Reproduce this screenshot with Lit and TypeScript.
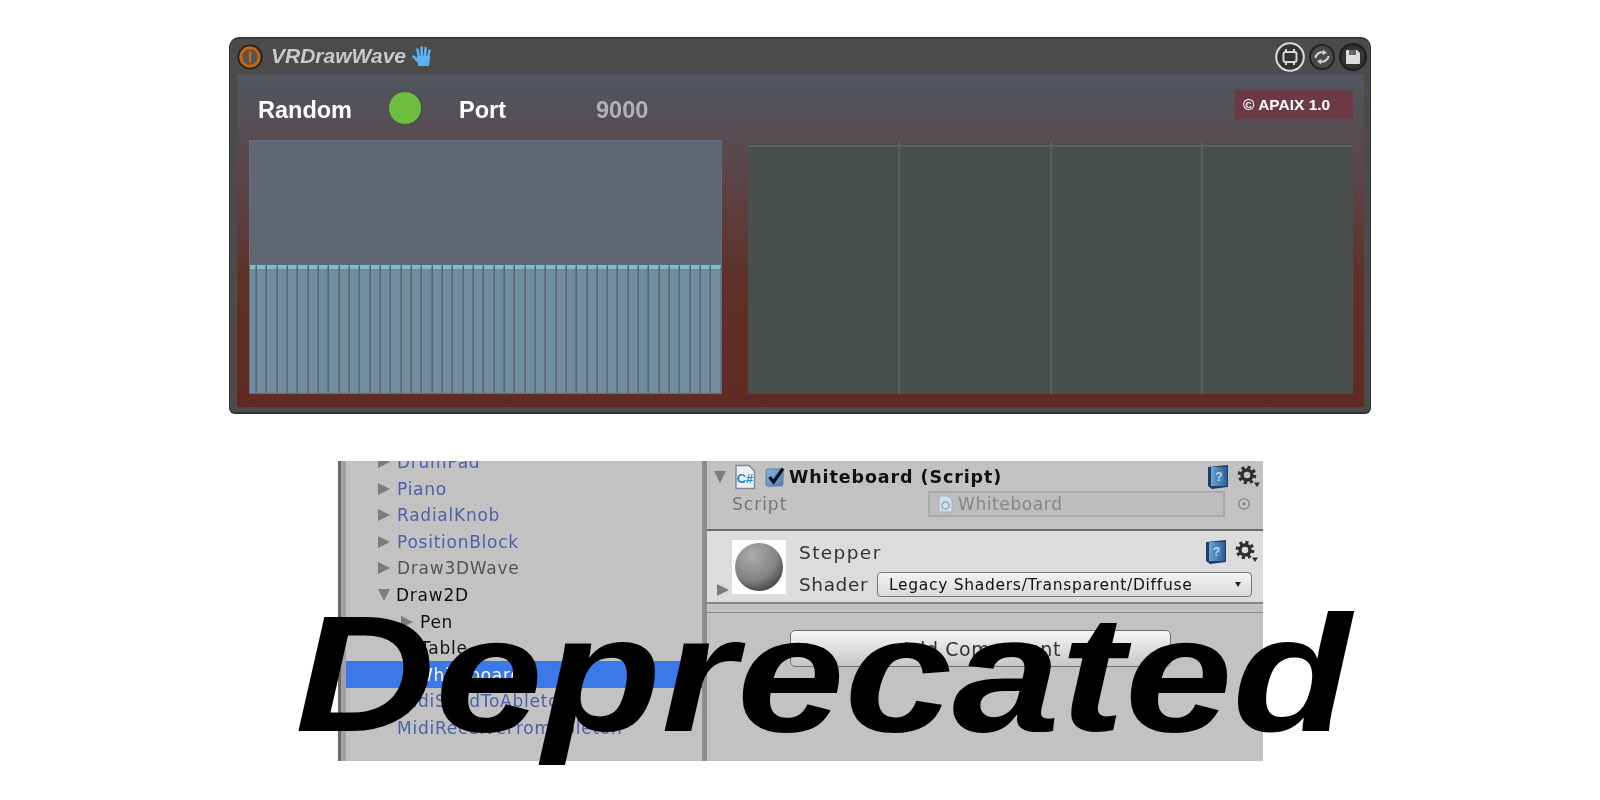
import { LitElement, css, html, svg } from 'lit';
import { customElement } from 'lit/decorators.js';

const BAR_COUNT = 46;

const TREE = [
    { label: 'DrumPad', depth: 1, arrow: 'right', tone: 'link' },
    { label: 'Piano', depth: 1, arrow: 'right', tone: 'link' },
    { label: 'RadialKnob', depth: 1, arrow: 'right', tone: 'link' },
    { label: 'PositionBlock', depth: 1, arrow: 'right', tone: 'link' },
    { label: 'Draw3DWave', depth: 1, arrow: 'right', tone: 'muted' },
    { label: 'Draw2D', depth: 1, arrow: 'down', tone: 'dark' },
    { label: 'Pen', depth: 2, arrow: 'right', tone: 'dark' },
    { label: 'Table', depth: 2, arrow: 'right', tone: 'dark' },
    { label: 'Whiteboard', depth: 2, arrow: '', tone: 'selected' },
    { label: 'MidiSendToAbleton', depth: 1, arrow: '', tone: 'link' },
    { label: 'MidiReceiveFromAbleton', depth: 1, arrow: '', tone: 'link' },
];

const powerIcon = html`<svg width="26" height="26" viewBox="0 0 26 26">
    <circle cx="13" cy="13" r="12.5" fill="#222"/>
    <circle cx="13" cy="13" r="9.2" fill="#555" stroke="#c9660f" stroke-width="3"/>
    <rect x="11.8" y="7.5" width="2.4" height="11" fill="#c9660f"/>
</svg>`;

const handIcon = html`<svg width="24" height="24" viewBox="0 0 24 24" fill="none" stroke="#5cb0f4" stroke-linecap="round">
    <path d="M8 20 L17 20 L18 12 L7 12 Z" fill="#5cb0f4" stroke-width="2"/>
    <path d="M8 13 L6.5 4.5 M11 12 L10.5 2.5 M14 12 L14.5 3 M17 13 L18.5 5.5" stroke-width="2.6"/>
    <path d="M8 17 L2.5 11.5" stroke-width="2.6"/>
</svg>`;

const frameIcon = html`<svg width="30" height="30" viewBox="0 0 30 30" fill="none">
    <circle cx="15" cy="15" r="13.8" fill="#333" stroke="#dcdcdc" stroke-width="2"/>
    <rect x="8.5" y="10" width="13" height="10" rx="2" stroke="#d8d8d8" stroke-width="2"/>
    <path d="M11 7 V10 M19 7 V10 M11 20 V23 M19 20 V23" stroke="#d8d8d8" stroke-width="2"/>
</svg>`;

const syncIcon = html`<svg width="26" height="26" viewBox="0 0 26 26" fill="none">
    <circle cx="13" cy="13" r="12" fill="#4a4a4a" stroke="#222" stroke-width="2"/>
    <path d="M6.5 14 C7 9.5 11 7.5 15 8.5" stroke="#cfcfcf" stroke-width="2.2"/>
    <path d="M19.5 12 C19 16.5 15 18.5 11 17.5" stroke="#cfcfcf" stroke-width="2.2"/>
    <path d="M14 5.5 L18 9 L13.5 11 Z M12 20.5 L8 17 L12.5 15 Z" fill="#cfcfcf"/>
</svg>`;

const saveIcon = html`<svg width="28" height="28" viewBox="0 0 28 28">
    <circle cx="14" cy="14" r="13" fill="#333" stroke="#1e1e1e" stroke-width="2"/>
    <path d="M7 8 Q7 7 8 7 H18 L21 10 V20 Q21 21 20 21 H8 Q7 21 7 20 Z" fill="#dcdcdc"/>
    <rect x="10" y="7" width="7" height="5" fill="#666"/>
</svg>`;

const csharpIcon = html`<svg width="22" height="26" viewBox="0 0 22 26">
    <path d="M2 1.5 H15 L20.5 7 V24.5 H2 Z" fill="#eef2f5" stroke="#7e8c96" stroke-width="1.5"/>
    <text x="11" y="19" text-anchor="middle" font-family="Liberation Sans, sans-serif" font-weight="700" font-size="13" fill="#1c86c8">C#</text>
</svg>`;

const checkIcon = html`<svg width="22" height="22" viewBox="0 0 22 22">
    <defs><linearGradient id="cb" x1="0" y1="0" x2="1" y2="1"><stop offset="0" stop-color="#8eb4dc"/><stop offset="1" stop-color="#4d7fb6"/></linearGradient></defs>
    <rect x="2" y="3" width="17" height="17" rx="2" fill="url(#cb)" stroke="#5d7c9c"/>
    <path d="M5.5 11 L9.5 16 L19 2.5" fill="none" stroke="#06121f" stroke-width="3.2"/>
</svg>`;

const bookIcon = html`<svg width="24" height="26" viewBox="0 0 24 26">
    <defs><linearGradient id="bk" x1="0" y1="0" x2="1" y2="0"><stop offset="0" stop-color="#6fa3d2"/><stop offset="1" stop-color="#2d5c96"/></linearGradient></defs>
    <path d="M2 3 L22 1 V23 L6 25 L2 22 Z" fill="#1e3c68"/>
    <rect x="5" y="3" width="16" height="19" fill="url(#bk)"/>
    <rect x="9" y="7" width="8" height="11" fill="#4d86ba"/>
    <text x="13" y="17" text-anchor="middle" font-family="Liberation Sans, sans-serif" font-size="12" font-weight="700" fill="#c5d8ea">?</text>
</svg>`;

const gearIcon = html`<svg width="24" height="24" viewBox="0 0 24 24" fill="none">
    <circle cx="10" cy="10" r="7.6" stroke="#2e2e2e" stroke-width="3.4" stroke-dasharray="3 3"/>
    <circle cx="10" cy="10" r="5" stroke="#2e2e2e" stroke-width="3.4"/>
    <path d="M17 17.5 H23 L20 22 Z" fill="#2e2e2e"/>
</svg>`;

const targetIcon = html`<svg width="14" height="14" viewBox="0 0 14 14" fill="none">
    <circle cx="7" cy="7" r="5.2" stroke="#777" stroke-width="1.1"/>
    <circle cx="7" cy="7" r="1.4" fill="#777"/>
</svg>`;

const scriptFileIcon = html`<svg width="16" height="18" viewBox="0 0 16 18">
    <path d="M2 1 H11 L15 5 V17 H2 Z" fill="#d5dde2" stroke="#a9b2b8"/>
    <circle cx="8.5" cy="10.5" r="3.5" fill="none" stroke="#7fb1cf" stroke-width="1.6"/>
</svg>`;

const sphere = svg`<svg width="54" height="54" viewBox="0 0 54 54">
    <defs><radialGradient id="sp" cx="0.36" cy="0.25" r="0.85"><stop offset="0" stop-color="#ababab"/><stop offset="0.6" stop-color="#858585"/><stop offset="1" stop-color="#383838"/></radialGradient></defs>
    <rect width="54" height="54" fill="#fff"/>
    <circle cx="27" cy="27" r="24" fill="url(#sp)"/>
</svg>`;

@customElement('app-root')
export class AppRoot extends LitElement {
    static styles = css`
        :host {
            display: block;
            position: relative;
            height: 800px;
            overflow: hidden;
            background: #fff;
            font-family: "Liberation Sans", Arial, sans-serif;
        }

        /* top screenshot: the Max device */
        .device {
            box-sizing: border-box;
            width: 1142px;
            height: 377px;
            margin: 37px 0 0 229px;
            padding: 0 6px 5px 7px;
            display: flex;
            flex-direction: column;
            background: #4b4b4b;
            border: 1px solid #333;
            border-top: 2px solid #3a3a3a;
            border-radius: 10px 10px 6px 6px;
            border-bottom: 2px solid #2e2e2e;
        }

        .titlebar {
            height: 35px;
            display: flex;
            align-items: center;
            flex: none;
        }

        .titlebar svg {
            display: block;
            flex: none;
        }

        .title {
            margin: -2px 5px 0 8px;
            font-size: 21px;
            font-weight: 700;
            font-style: italic;
            color: #c9c9c9;
            filter: blur(0.4px);
        }

        .title-actions {
            margin-left: auto;
            display: flex;
            align-items: center;
            gap: 4px;
            margin-right: -3px;
        }

        .body {
            flex: 1;
            display: flex;
            flex-direction: column;
            min-height: 0;
            padding: 16px 11px 13px 12px;
            background: linear-gradient(180deg, #50565f 0%, #5a4a50 22%, #5f3029 62%, #602a22 100%);
        }

        .controls {
            height: 50px;
            flex: none;
            display: flex;
            align-items: flex-start;
            font-size: 23.5px;
            font-weight: 700;
            color: #fff;
        }

        .label {
            margin-top: 7px;
            filter: blur(0.4px);
        }

        .random {
            width: 130px;
            padding-left: 9px;
        }

        .led {
            width: 34px;
            height: 34px;
            margin-top: 1px;
            flex: none;
            border-radius: 50%;
            background: #6dbe3f;
            border: 1px solid #4d4d50;
            box-sizing: border-box;
        }

        .port {
            margin-left: 37px;
            width: 137px;
        }

        .port-value {
            color: #b2b2b2;
        }

        .badge {
            margin-left: auto;
            width: 118px;
            height: 29px;
            box-sizing: border-box;
            padding-left: 8px;
            line-height: 29px;
            font-size: 15.5px;
            background: #6b3a46;
            filter: blur(0.3px);
        }

        .panels {
            flex: 1;
            min-height: 0;
            display: flex;
            gap: 26px;
        }

        .sliders {
            box-sizing: border-box;
            width: 473px;
            padding-top: 124px;
            display: flex;
            gap: 1px;
            background: #5f6672;
            border: 1px solid #5e6f80;
        }

        .bar {
            flex: 1;
            background: #6f8d9c;
            border-top: 4px solid #7cbdcd;
            border-right: 1px solid #66747f;
        }

        .bar:first-child {
            flex: 0 0 5px;
        }

        .scope {
            position: relative;
            flex: 1;
            margin-top: 3px;
            padding-top: 2px;
            display: flex;
            background: #4a4e4c;
        }

        .scope-col {
            flex: 1;
            border-top: 2px solid #5a5f60;
            border-right: 2px solid #5a5f60;
            position: relative;
        }

        .scope-col:not(:last-child)::after {
            content: '';
            position: absolute;
            top: -5px;
            right: -2px;
            width: 2px;
            height: 5px;
            background: #5a5f60;
        }

        .scope-col:last-child {
            border-right: none;
        }

        /* bottom screenshot: the Unity editor */
        .unity {
            position: relative;
            width: 925px;
            height: 300px;
            margin: 47px 0 0 338px;
            display: flex;
            overflow: hidden;
            background: #c2c2c2;
            font-family: "DejaVu Sans", Verdana, sans-serif;
            filter: blur(0.45px);
        }

        .tree {
            box-sizing: border-box;
            width: 366px;
            flex: none;
            margin-top: -12px;
            border-left: 3px solid #6a6a6a;
            border-right: 2px solid #8f8f8f;
            box-shadow: inset 5px 0 0 #a0a0a0;
        }

        .row {
            height: 26.55px;
            display: flex;
            align-items: center;
            font-size: 17px;
            letter-spacing: 0.75px;
        }

        .row.selected {
            margin-left: 5px;
            background: #3b78e8;
        }

        .arrow {
            flex: none;
            width: 0;
            height: 0;
            margin-right: 7px;
            border-top: 6.5px solid transparent;
            border-bottom: 6.5px solid transparent;
            border-left: 12px solid #7c7c7c;
        }

        .arrow.down {
            border-left: 6.5px solid transparent;
            border-right: 6.5px solid transparent;
            border-top: 12px solid #7c7c7c;
            border-bottom: none;
            margin-right: 6px;
        }

        .depth-1 {
            padding-left: 37px;
        }

        .depth-2 {
            padding-left: 60px;
        }

        .depth-1.no-arrow {
            padding-left: 56px;
        }

        .depth-2.no-arrow {
            padding-left: 70px;
        }

        .link {
            color: #4a63a8;
        }

        .muted {
            color: #555;
        }

        .dark {
            color: #111;
        }

        .selected {
            color: #fff;
        }

        .inspector {
            flex: 1;
            min-width: 0;
            display: flex;
            flex-direction: column;
            border-left: 3px solid #8c8c8c;
        }

        .component {
            box-sizing: border-box;
            height: 70px;
            flex: none;
            padding: 3px 2px 0 7px;
            border-bottom: 2px solid #6a6a6a;
        }

        .head {
            display: flex;
            align-items: center;
            height: 26px;
        }

        .head svg,
        .script-row svg,
        .material svg {
            display: block;
            flex: none;
        }

        .arrow.small {
            margin-right: 8px;
        }

        .check-gap {
            width: 8px;
        }

        .head-title {
            margin-left: 3px;
            font-size: 17.5px;
            font-weight: 700;
            letter-spacing: 0.9px;
            color: #111;
        }

        .head-icons {
            margin-left: auto;
            display: flex;
            align-items: center;
            gap: 7px;
        }

        .script-row {
            display: flex;
            align-items: center;
            height: 26px;
            margin-top: 1px;
            padding-left: 18px;
            font-size: 17px;
            letter-spacing: 0.6px;
            color: #777;
        }

        .script-label {
            width: 196px;
            letter-spacing: 1px;
        }

        .script-field {
            box-sizing: border-box;
            width: 297px;
            height: 26px;
            display: flex;
            align-items: center;
            gap: 5px;
            padding-left: 7px;
            background: #bdbdbd;
            border: 2px solid #aaaaaa;
            color: #868686;
        }

        .script-target {
            margin-left: 12px;
        }

        .material {
            box-sizing: border-box;
            height: 73px;
            flex: none;
            display: flex;
            padding: 9px 4px 0 10px;
            background: #dcdcdc;
            border-bottom: 2px solid #858585;
        }

        .material-arrow {
            align-self: flex-start;
            margin: 44px 3px 0 0;
        }

        .material-main {
            flex: 1;
            min-width: 0;
            margin: -1px 0 0 13px;
            color: #333;
            font-size: 18.5px;
            letter-spacing: 0.6px;
        }

        .material-name {
            display: flex;
            align-items: center;
            height: 26px;
            letter-spacing: 1.4px;
        }

        .shader {
            display: flex;
            align-items: center;
            margin-top: 7px;
        }

        .shader-label {
            width: 78px;
            flex: none;
        }

        .dropdown {
            box-sizing: border-box;
            width: 375px;
            height: 25px;
            padding: 0 8px 0 11px;
            display: flex;
            align-items: center;
            justify-content: space-between;
            font-size: 15.5px;
            letter-spacing: 0.7px;
            color: #111;
            background: linear-gradient(180deg, #f2f2f2, #dadada);
            border: 1px solid #777;
            border-radius: 4px;
        }

        .caret {
            width: 0;
            height: 0;
            margin-right: 2px;
            border-left: 3.5px solid transparent;
            border-right: 3.5px solid transparent;
            border-top: 5px solid #222;
        }

        .footer {
            flex: 1;
            padding-top: 17px;
            border-top: 1px solid #8a8a8a;
            margin-top: 8px;
        }

        .add {
            box-sizing: border-box;
            width: 381px;
            height: 37px;
            margin-left: 83px;
            display: flex;
            align-items: center;
            justify-content: center;
            font-size: 19px;
            letter-spacing: 0.6px;
            color: #333;
            background: linear-gradient(180deg, #f6f6f6, #c6c6c6);
            border: 1px solid #6e6e6e;
            border-radius: 5px;
        }

        /* stamp that lies over the bottom screenshot */
        .stamp {
            position: absolute;
            left: 295px;
            top: 592px;
            font-size: 165px;
            line-height: 1;
            font-weight: 700;
            font-style: italic;
            color: #000;
            white-space: nowrap;
            transform: scaleX(1.175);
            transform-origin: left top;
        }
    `;

    renderRow(row: (typeof TREE)[number]) {
        const classes = `row depth-${row.depth} ${row.tone} ${row.arrow ? '' : 'no-arrow'}`;
        return html`<div class="${classes}">
            ${row.arrow ? html`<span class="arrow ${row.arrow === 'down' ? 'down' : ''}"></span>` : ''}
            <span>${row.label}</span>
        </div>`;
    }

    render() {
        return html`
            <div class="device">
                <div class="titlebar">
                    ${powerIcon}
                    <span class="title">VRDrawWave</span>
                    ${handIcon}
                    <div class="title-actions">${frameIcon}${syncIcon}${saveIcon}</div>
                </div>
                <div class="body">
                    <div class="controls">
                        <span class="label random">Random</span>
                        <span class="led"></span>
                        <span class="label port">Port</span>
                        <span class="label port-value">9000</span>
                        <span class="badge">© APAIX 1.0</span>
                    </div>
                    <div class="panels">
                        <div class="sliders">
                            ${Array.from({ length: BAR_COUNT }, () => html`<div class="bar"></div>`)}
                        </div>
                        <div class="scope">
                            <div class="scope-col"></div>
                            <div class="scope-col"></div>
                            <div class="scope-col"></div>
                            <div class="scope-col"></div>
                        </div>
                    </div>
                </div>
            </div>

            <div class="unity">
                <div class="tree">${TREE.map((row) => this.renderRow(row))}</div>
                <div class="inspector">
                    <div class="component">
                        <div class="head">
                            <span class="arrow down small"></span>
                            ${csharpIcon}
                            <span class="check-gap"></span>
                            ${checkIcon}
                            <span class="head-title">Whiteboard (Script)</span>
                            <span class="head-icons">${bookIcon}${gearIcon}</span>
                        </div>
                        <div class="script-row">
                            <span class="script-label">Script</span>
                            <span class="script-field">${scriptFileIcon}Whiteboard</span>
                            <span class="script-target">${targetIcon}</span>
                        </div>
                    </div>
                    <div class="material">
                        <span class="arrow material-arrow"></span>
                        ${sphere}
                        <div class="material-main">
                            <div class="material-name">
                                Stepper
                                <span class="head-icons">${bookIcon}${gearIcon}</span>
                            </div>
                            <div class="shader">
                                <span class="shader-label">Shader</span>
                                <div class="dropdown">Legacy Shaders/Transparent/Diffuse<span class="caret"></span></div>
                            </div>
                        </div>
                    </div>
                    <div class="footer">
                        <div class="add">Add Component</div>
                    </div>
                </div>
            </div>

            <div class="stamp">Deprecated</div>
        `;
    }
}
